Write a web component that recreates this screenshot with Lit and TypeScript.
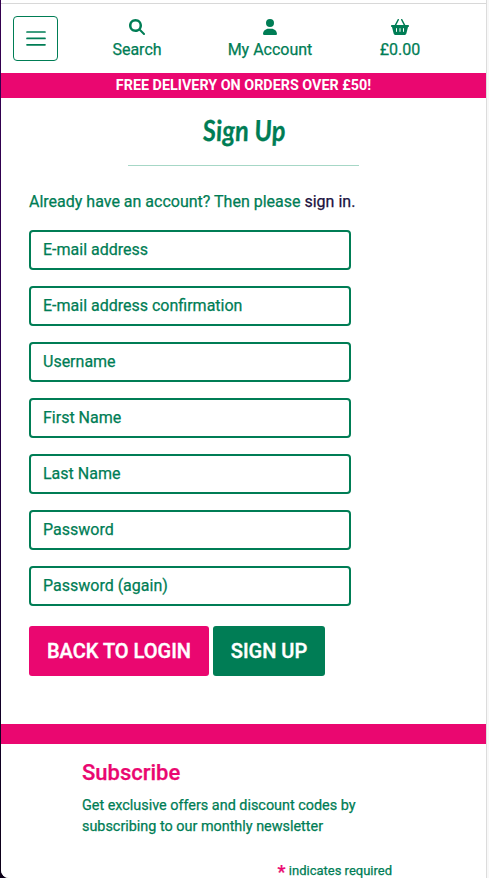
import { LitElement, html, css, svg } from "lit";
import { customElement } from "lit/decorators.js";

const searchIcon = svg`<path d="M416 208c0 45.9-14.9 88.3-40 122.7L502.6 457.4c12.5 12.5 12.5 32.8 0 45.3s-32.8 12.5-45.3 0L330.7 376c-34.4 25.2-76.8 40-122.7 40C93.1 416 0 322.9 0 208S93.1 0 208 0S416 93.1 416 208zM208 336a128 128 0 1 0 0-256 128 128 0 1 0 0 256z"/>`;
const userIcon = svg`<path d="M224 256A128 128 0 1 0 224 0a128 128 0 1 0 0 256zm-45.7 56C79.8 312 0 388 0 482.3C0 498.7 13.3 512 29.7 512H418.3c16.4 0 29.7-13.3 29.7-29.7C448 388 368.2 312 269.7 312H178.3z"/>`;
const basketIcon = svg`<path d="M253.3 35.1c6.1-11.8 1.5-26.3-10.2-32.4s-26.3-1.5-32.4 10.2L117.6 192H32c-17.7 0-32 14.3-32 32s14.3 32 32 32L83.9 463.5C91 492 116.6 512 146 512H430c29.4 0 55-20 62.1-48.5L544 256c17.7 0 32-14.3 32-32s-14.3-32-32-32H458.4L365.3 12.9C359.2 1.2 344.7-3.4 332.9 2.7s-16.3 20.6-10.2 32.4L404.3 192H171.7L253.3 35.1zM192 304v96c0 8.8-7.2 16-16 16s-16-7.2-16-16V304c0-8.8 7.2-16 16-16s16 7.2 16 16zm96-16c8.8 0 16 7.2 16 16v96c0 8.8-7.2 16-16 16s-16-7.2-16-16V304c0-8.8 7.2-16 16-16zm128 16v96c0 8.8-7.2 16-16 16s-16-7.2-16-16V304c0-8.8 7.2-16 16-16s16 7.2 16 16z"/>`;

const fields = [
  { label: "E-mail address", type: "email" },
  { label: "E-mail address confirmation", type: "email" },
  { label: "Username", type: "text" },
  { label: "First Name", type: "text" },
  { label: "Last Name", type: "text" },
  { label: "Password", type: "password" },
  { label: "Password (again)", type: "password" },
];

@customElement("app-root")
export class AppRoot extends LitElement {
  static styles = css`
    :host {
      display: block;
      height: 878px;
      overflow: hidden;
      background: linear-gradient(#35004f, #2b0050 40%, #14002c 75%, #0c0018);
      font: 400 16px/24px Roboto, sans-serif;
      -webkit-text-stroke: 0.25px currentColor;
      color: #007d55;
    }
    * { box-sizing: border-box; }
    .window {
      display: flex;
      height: 878px;
      margin-left: 1px;
      background: #f8f8f8;
      border-bottom-left-radius: 8px;
      overflow: hidden;
    }
    .page {
      width: 486px;
      flex: none;
      background: #fff;
      border-right: 1px solid #dcdcdc;
    }
    .topline { height: 4px; border-bottom: 1px solid #d8d8d8; }
    .nav { display: flex; height: 69px; padding: 12px 0 0 12px; }
    .toggle {
      width: 45px;
      height: 45px;
      padding: 0;
      border: 1px solid #007d55;
      border-radius: 4px;
      background: none;
      display: flex;
      align-items: center;
      justify-content: center;
    }
    .links { display: grid; grid-template-columns: 134px 132px 128px; margin-left: 12px; }
    .link { display: flex; flex-direction: column; align-items: center; padding-top: 3px; }
    .link svg { height: 16px; fill: #007d55; display: block; }
    .link span { margin-top: 3px; }
    .promo {
      height: 25px;
      background: #ea0770;
      color: #fff;
      text-align: center;
      font: 700 14.35px/25px Roboto, sans-serif;
      -webkit-text-stroke: 0;
    }
    .title {
      width: 231px;
      height: 68px;
      margin: 0 auto;
      border-bottom: 1px solid #a6d7c6;
      text-align: center;
      font: italic 700 29px/63px Lato, sans-serif;
    }
    .title span { display: inline-block; transform: scaleX(0.88) skewX(4deg); }
    .content { padding: 24px 28px 0; }
    .intro { margin: 0 0 16px; }
    .intro a { color: #1b1240; text-decoration: none; }
    .form { display: flex; flex-direction: column; gap: 16px; width: 322px; }
    .field {
      height: 40px;
      width: 100%;
      padding: 0 12px 2px;
      border: 2px solid #007d55;
      border-radius: 4px;
      font: inherit;
      color: #007d55;
      background: #fff;
    }
    .field::placeholder { color: #007d55; opacity: 1; }
    .actions { display: flex; gap: 4px; margin-top: 20px; }
    .btn {
      height: 50px;
      padding: 0;
      border: 0;
      border-radius: 3px;
      color: #fff;
      font: 500 20px/50px Roboto, sans-serif;
      -webkit-text-stroke: 0.4px #fff;
    }
    .back { width: 180px; background: #ea0770; }
    .signup { width: 112px; background: #007d55; }
    .band { height: 20px; margin-top: 48px; background: #ea0770; }
    .subscribe { padding: 15px 0 0 81px; width: 391px; }
    .subscribe h2 { margin: 0; font: 500 22px/28px Roboto, sans-serif; color: #ea0770; }
    .subscribe p { margin: 8px 0 0; font-size: 14.4px; line-height: 21px; white-space: nowrap; }
    .required { margin-top: 24px; text-align: right; font-size: 13px; line-height: 20px; white-space: nowrap; }
    .star { color: #ea0770; font-size: 18px; font-weight: 500; line-height: 0; vertical-align: -3px; }
  `;

  render() {
    return html`
      <div class="window">
        <main class="page">
          <div class="topline"></div>
          <nav class="nav">
            <button class="toggle" aria-label="Menu">
              <svg width="20" height="16" viewBox="0 0 20 16" stroke="#007d55" stroke-width="1.7" stroke-linecap="round">
                <path d="M1 1h18M1 7.4h18M1 13.8h18" />
              </svg>
            </button>
            <div class="links">
              <div class="link"><svg viewBox="0 0 512 512" width="16">${searchIcon}</svg><span>Search</span></div>
              <div class="link"><svg viewBox="0 0 448 512" width="14">${userIcon}</svg><span>My Account</span></div>
              <div class="link"><svg viewBox="0 0 576 512" width="18">${basketIcon}</svg><span>£0.00</span></div>
            </div>
          </nav>
          <div class="promo">FREE DELIVERY ON ORDERS OVER £50!</div>
          <h1 class="title"><span>Sign Up</span></h1>
          <section class="content">
            <p class="intro">Already have an account? Then please <a>sign in.</a></p>
            <div class="form">
              ${fields.map((f) => html`<input class="field" type=${f.type} placeholder=${f.label} />`)}
            </div>
            <div class="actions">
              <button class="btn back">BACK TO LOGIN</button>
              <button class="btn signup">SIGN UP</button>
            </div>
          </section>
          <div class="band"></div>
          <section class="subscribe">
            <h2>Subscribe</h2>
            <p>Get exclusive offers and discount codes by<br />subscribing to our monthly newsletter</p>
            <div class="required"><span class="star">*</span> indicates required</div>
          </section>
        </main>
      </div>
    `;
  }
}
